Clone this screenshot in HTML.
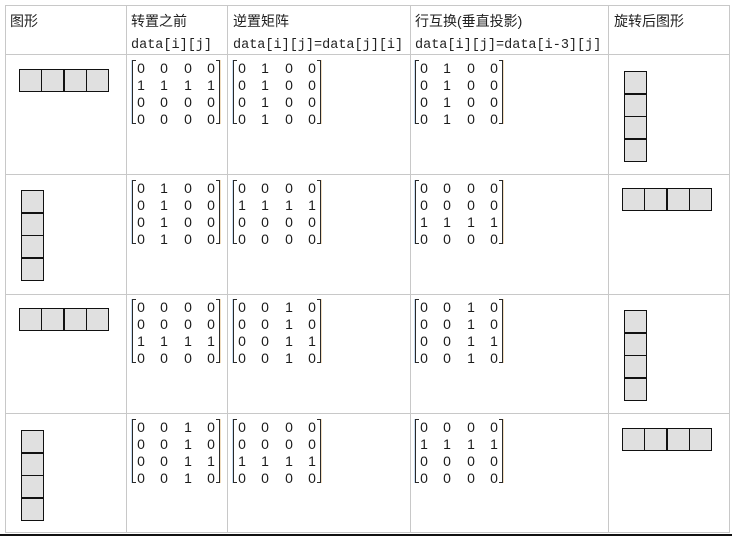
<!DOCTYPE html>
<html><head><meta charset="utf-8"><style>
body{margin:0;width:732px;height:536px;background:#fff;position:relative;overflow:hidden;font-family:"Liberation Sans","Noto Sans CJK SC",sans-serif;}
.h{position:absolute;height:1px;background:#c8c8c8}
.v{position:absolute;width:1px;background:#c8c8c8}
.t{position:absolute;font-size:14px;color:#222;line-height:22px}
.m{font-family:"Liberation Mono","DejaVu Sans Mono",monospace;font-size:13.5px}
.mx{position:absolute;width:88px;height:64px}
.mx .l{position:absolute;left:0;top:0;width:3px;height:62px;border:1.5px solid #2a2a2a;border-right:none}
.mx .r{position:absolute;right:0;top:0;width:3px;height:62px;border:1.5px solid #2a2a2a;border-left:none;box-shadow:0.5px 0 0 rgba(200,120,0,.5)}
.mx .l{box-shadow:-0.5px 0 0 rgba(42,122,208,.5)}
.mx .row{position:absolute;left:5px;height:17px;font-size:14px;line-height:17px;color:#1a1a1a}
.mx .row span{position:absolute;width:8px;text-align:center}
.s0{left:0}.s1{left:23px}.s2{left:47px}.s3{left:70px}
.c{position:absolute;width:21px;height:21px;border:1.2px solid #111;background:#e0e0e0;box-sizing:content-box}
</style></head><body>
<div class="h" style="left:5px;top:5px;width:724px"></div>
<div class="h" style="left:5px;top:54px;width:724px"></div>
<div class="h" style="left:5px;top:174px;width:724px"></div>
<div class="h" style="left:5px;top:294px;width:724px"></div>
<div class="h" style="left:5px;top:413px;width:724px"></div>
<div class="h" style="left:5px;top:532px;width:724px"></div>
<div style="position:absolute;left:0;top:534px;width:732px;height:2px;background:#111"></div>
<div class="v" style="left:5px;top:5px;height:528px"></div>
<div class="v" style="left:126px;top:5px;height:528px"></div>
<div class="v" style="left:227px;top:5px;height:528px"></div>
<div class="v" style="left:410px;top:5px;height:528px"></div>
<div class="v" style="left:608px;top:5px;height:528px"></div>
<div class="v" style="left:729px;top:5px;height:528px"></div>

<div class="t" style="left:10px;top:10px">图形</div>
<div class="t" style="left:131px;top:10px">转置之前<br><span class="m">data[i][j]</span></div>
<div class="t" style="left:233px;top:10px">逆置矩阵<br><span class="m">data[i][j]=data[j][i]</span></div>
<div class="t" style="left:415px;top:10px">行互换(垂直投影)<br><span class="m">data[i][j]=data[i-3][j]</span></div>
<div class="t" style="left:614px;top:10px">旋转后图形</div>

<!-- Row 1 -->
<div class="mx" style="left:132px;top:60px"><div class="l"></div><div class="r"></div>
<div class="row" style="top:0"><span class="s0">0</span><span class="s1">0</span><span class="s2">0</span><span class="s3">0</span></div>
<div class="row" style="top:17px"><span class="s0">1</span><span class="s1">1</span><span class="s2">1</span><span class="s3">1</span></div>
<div class="row" style="top:34px"><span class="s0">0</span><span class="s1">0</span><span class="s2">0</span><span class="s3">0</span></div>
<div class="row" style="top:51px"><span class="s0">0</span><span class="s1">0</span><span class="s2">0</span><span class="s3">0</span></div></div>
<div class="mx" style="left:233px;top:60px"><div class="l"></div><div class="r"></div>
<div class="row" style="top:0"><span class="s0">0</span><span class="s1">1</span><span class="s2">0</span><span class="s3">0</span></div>
<div class="row" style="top:17px"><span class="s0">0</span><span class="s1">1</span><span class="s2">0</span><span class="s3">0</span></div>
<div class="row" style="top:34px"><span class="s0">0</span><span class="s1">1</span><span class="s2">0</span><span class="s3">0</span></div>
<div class="row" style="top:51px"><span class="s0">0</span><span class="s1">1</span><span class="s2">0</span><span class="s3">0</span></div></div>
<div class="mx" style="left:415px;top:60px"><div class="l"></div><div class="r"></div>
<div class="row" style="top:0"><span class="s0">0</span><span class="s1">1</span><span class="s2">0</span><span class="s3">0</span></div>
<div class="row" style="top:17px"><span class="s0">0</span><span class="s1">1</span><span class="s2">0</span><span class="s3">0</span></div>
<div class="row" style="top:34px"><span class="s0">0</span><span class="s1">1</span><span class="s2">0</span><span class="s3">0</span></div>
<div class="row" style="top:51px"><span class="s0">0</span><span class="s1">1</span><span class="s2">0</span><span class="s3">0</span></div></div>

<!-- Row 2 -->
<div class="mx" style="left:132px;top:180px"><div class="l"></div><div class="r"></div>
<div class="row" style="top:0"><span class="s0">0</span><span class="s1">1</span><span class="s2">0</span><span class="s3">0</span></div>
<div class="row" style="top:17px"><span class="s0">0</span><span class="s1">1</span><span class="s2">0</span><span class="s3">0</span></div>
<div class="row" style="top:34px"><span class="s0">0</span><span class="s1">1</span><span class="s2">0</span><span class="s3">0</span></div>
<div class="row" style="top:51px"><span class="s0">0</span><span class="s1">1</span><span class="s2">0</span><span class="s3">0</span></div></div>
<div class="mx" style="left:233px;top:180px"><div class="l"></div><div class="r"></div>
<div class="row" style="top:0"><span class="s0">0</span><span class="s1">0</span><span class="s2">0</span><span class="s3">0</span></div>
<div class="row" style="top:17px"><span class="s0">1</span><span class="s1">1</span><span class="s2">1</span><span class="s3">1</span></div>
<div class="row" style="top:34px"><span class="s0">0</span><span class="s1">0</span><span class="s2">0</span><span class="s3">0</span></div>
<div class="row" style="top:51px"><span class="s0">0</span><span class="s1">0</span><span class="s2">0</span><span class="s3">0</span></div></div>
<div class="mx" style="left:415px;top:180px"><div class="l"></div><div class="r"></div>
<div class="row" style="top:0"><span class="s0">0</span><span class="s1">0</span><span class="s2">0</span><span class="s3">0</span></div>
<div class="row" style="top:17px"><span class="s0">0</span><span class="s1">0</span><span class="s2">0</span><span class="s3">0</span></div>
<div class="row" style="top:34px"><span class="s0">1</span><span class="s1">1</span><span class="s2">1</span><span class="s3">1</span></div>
<div class="row" style="top:51px"><span class="s0">0</span><span class="s1">0</span><span class="s2">0</span><span class="s3">0</span></div></div>

<!-- Row 3 -->
<div class="mx" style="left:132px;top:299px"><div class="l"></div><div class="r"></div>
<div class="row" style="top:0"><span class="s0">0</span><span class="s1">0</span><span class="s2">0</span><span class="s3">0</span></div>
<div class="row" style="top:17px"><span class="s0">0</span><span class="s1">0</span><span class="s2">0</span><span class="s3">0</span></div>
<div class="row" style="top:34px"><span class="s0">1</span><span class="s1">1</span><span class="s2">1</span><span class="s3">1</span></div>
<div class="row" style="top:51px"><span class="s0">0</span><span class="s1">0</span><span class="s2">0</span><span class="s3">0</span></div></div>
<div class="mx" style="left:233px;top:299px"><div class="l"></div><div class="r"></div>
<div class="row" style="top:0"><span class="s0">0</span><span class="s1">0</span><span class="s2">1</span><span class="s3">0</span></div>
<div class="row" style="top:17px"><span class="s0">0</span><span class="s1">0</span><span class="s2">1</span><span class="s3">0</span></div>
<div class="row" style="top:34px"><span class="s0">0</span><span class="s1">0</span><span class="s2">1</span><span class="s3">1</span></div>
<div class="row" style="top:51px"><span class="s0">0</span><span class="s1">0</span><span class="s2">1</span><span class="s3">0</span></div></div>
<div class="mx" style="left:415px;top:299px"><div class="l"></div><div class="r"></div>
<div class="row" style="top:0"><span class="s0">0</span><span class="s1">0</span><span class="s2">1</span><span class="s3">0</span></div>
<div class="row" style="top:17px"><span class="s0">0</span><span class="s1">0</span><span class="s2">1</span><span class="s3">0</span></div>
<div class="row" style="top:34px"><span class="s0">0</span><span class="s1">0</span><span class="s2">1</span><span class="s3">1</span></div>
<div class="row" style="top:51px"><span class="s0">0</span><span class="s1">0</span><span class="s2">1</span><span class="s3">0</span></div></div>

<!-- Row 4 -->
<div class="mx" style="left:132px;top:419px"><div class="l"></div><div class="r"></div>
<div class="row" style="top:0"><span class="s0">0</span><span class="s1">0</span><span class="s2">1</span><span class="s3">0</span></div>
<div class="row" style="top:17px"><span class="s0">0</span><span class="s1">0</span><span class="s2">1</span><span class="s3">0</span></div>
<div class="row" style="top:34px"><span class="s0">0</span><span class="s1">0</span><span class="s2">1</span><span class="s3">1</span></div>
<div class="row" style="top:51px"><span class="s0">0</span><span class="s1">0</span><span class="s2">1</span><span class="s3">0</span></div></div>
<div class="mx" style="left:233px;top:419px"><div class="l"></div><div class="r"></div>
<div class="row" style="top:0"><span class="s0">0</span><span class="s1">0</span><span class="s2">0</span><span class="s3">0</span></div>
<div class="row" style="top:17px"><span class="s0">0</span><span class="s1">0</span><span class="s2">0</span><span class="s3">0</span></div>
<div class="row" style="top:34px"><span class="s0">1</span><span class="s1">1</span><span class="s2">1</span><span class="s3">1</span></div>
<div class="row" style="top:51px"><span class="s0">0</span><span class="s1">0</span><span class="s2">0</span><span class="s3">0</span></div></div>
<div class="mx" style="left:415px;top:419px"><div class="l"></div><div class="r"></div>
<div class="row" style="top:0"><span class="s0">0</span><span class="s1">0</span><span class="s2">0</span><span class="s3">0</span></div>
<div class="row" style="top:17px"><span class="s0">1</span><span class="s1">1</span><span class="s2">1</span><span class="s3">1</span></div>
<div class="row" style="top:34px"><span class="s0">0</span><span class="s1">0</span><span class="s2">0</span><span class="s3">0</span></div>
<div class="row" style="top:51px"><span class="s0">0</span><span class="s1">0</span><span class="s2">0</span><span class="s3">0</span></div></div>

<div class="c" style="left:19px;top:69px"></div><div class="c" style="left:41px;top:69px"></div><div class="c" style="left:64px;top:69px"></div><div class="c" style="left:86px;top:69px"></div>
<div class="c" style="left:19px;top:308px"></div><div class="c" style="left:41px;top:308px"></div><div class="c" style="left:64px;top:308px"></div><div class="c" style="left:86px;top:308px"></div>
<div class="c" style="left:622px;top:188px"></div><div class="c" style="left:644px;top:188px"></div><div class="c" style="left:667px;top:188px"></div><div class="c" style="left:689px;top:188px"></div>
<div class="c" style="left:622px;top:428px"></div><div class="c" style="left:644px;top:428px"></div><div class="c" style="left:667px;top:428px"></div><div class="c" style="left:689px;top:428px"></div>
<div class="c" style="left:624px;top:71px"></div><div class="c" style="left:624px;top:94px"></div><div class="c" style="left:624px;top:116px"></div><div class="c" style="left:624px;top:139px"></div>
<div class="c" style="left:624px;top:310px"></div><div class="c" style="left:624px;top:333px"></div><div class="c" style="left:624px;top:355px"></div><div class="c" style="left:624px;top:378px"></div>
<div class="c" style="left:21px;top:190px"></div><div class="c" style="left:21px;top:213px"></div><div class="c" style="left:21px;top:235px"></div><div class="c" style="left:21px;top:258px"></div>
<div class="c" style="left:21px;top:430px"></div><div class="c" style="left:21px;top:453px"></div><div class="c" style="left:21px;top:475px"></div><div class="c" style="left:21px;top:498px"></div>
</body></html>
